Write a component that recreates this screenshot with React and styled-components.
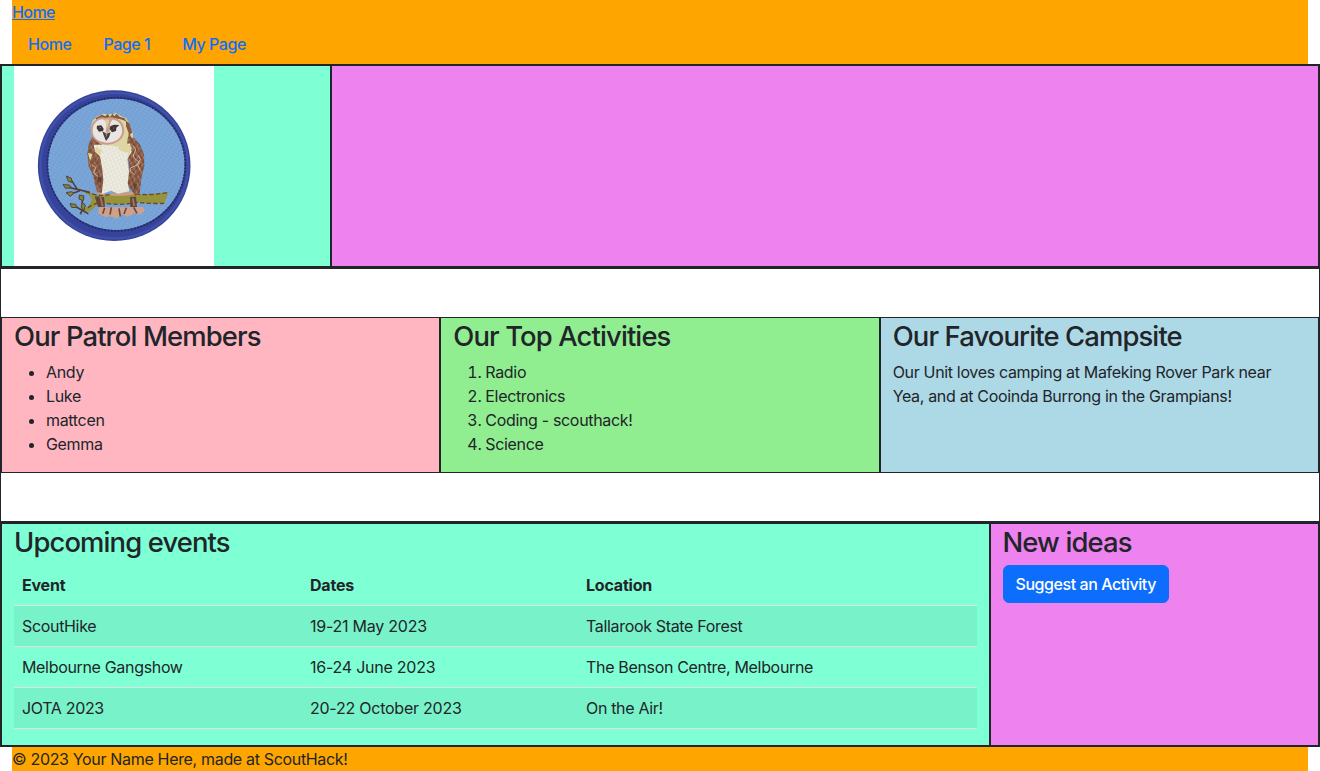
import React from "react";
import styled, { createGlobalStyle } from "styled-components";

const INK = "#212529";
const LINK = "#0d6efd";

const GlobalStyle = createGlobalStyle`
  *, *::before, *::after { box-sizing: border-box; }
  body {
    margin: 0;
    background: #fff;
    color: ${INK};
    font-family: Inter, "Liberation Sans", sans-serif;
    font-size: 16px;
    font-weight: 430;
    line-height: 1.5;
    letter-spacing: -0.33px;
    font-feature-settings: "calt" 0;
  }
`;

const Page = styled.div`
  width: 100%;
  overflow: hidden;
`;

const Header = styled.header`
  margin: 0 12px;
  background: orange;
`;

const Brand = styled.a`
  display: block;
  width: fit-content;
  color: ${LINK};
  font-weight: 470;
  letter-spacing: -0.6px;
  text-decoration: underline;
`;

const Nav = styled.nav`
  display: flex;
`;

const NavLink = styled.a`
  padding: 8px 16px;
  color: ${LINK};
  font-weight: 470;
  letter-spacing: -0.45px;
  text-decoration: none;
`;

const Row = styled.section`
  display: flex;
  border: 1px solid ${INK};
  padding: ${(p) => (p.$spaced ? "48px 0" : "0")};
`;

const Cell = styled.div`
  flex: 0 0 auto;
  width: ${(p) => p.$width};
  padding: 0 12px;
  border: 1px solid ${INK};
  background: ${(p) => p.$color};
`;

const Title = styled.h3`
  margin: 0 0 8px;
  padding-top: 4px;
  height: 33.6px;
  font-size: 27.4px;
  font-weight: 530;
  line-height: 29.6px;
  letter-spacing: -0.87px;
`;

const listStyle = `
  margin: 0 0 16px;
  padding-left: 32px;
`;
const BulletList = styled.ul`${listStyle}`;
const NumberList = styled.ol`${listStyle}`;

const Text = styled.p`
  margin: 0 0 16px;
`;

const Table = styled.table`
  width: 100%;
  margin: 0 0 16px;
  border-collapse: collapse;
  table-layout: fixed;
  text-align: left;
`;

const Col = styled.col`
  width: ${(p) => p.$width || "auto"};
`;

const HeadCell = styled.th`
  padding: 8px;
  font-weight: 700;
  letter-spacing: -0.2px;
  border-bottom: 1px solid #dee2e6;
`;

const BodyRow = styled.tr`
  &:nth-child(odd) { background: rgba(0, 0, 0, 0.05); }
`;

const BodyCell = styled.td`
  padding: 8px;
  border-bottom: 1px solid #dee2e6;

  &:nth-child(2) { letter-spacing: -0.24px; }
`;

const Button = styled.button`
  display: block;
  height: 38px;
  padding: 6px 12px;
  border: 1px solid ${LINK};
  border-radius: 6px;
  background: ${LINK};
  color: #fff;
  font: inherit;
  font-weight: 500;
  letter-spacing: -0.43px;
`;

const Footer = styled.footer`
  margin: 0 12px;
  background: orange;
`;

const Badge = styled.svg`
  display: block;
  width: 200px;
  height: 200px;
  background: #fff;
`;

function OwlBadge() {
  return (
    <Badge viewBox="12 6 600 600" role="img" aria-label="Owl patrol badge">
      <defs>
        <pattern id="twill" width="13" height="9" patternUnits="userSpaceOnUse" patternTransform="rotate(32)">
          <rect width="13" height="9" fill="#739fd3" />
          <path d="M0 3H10" stroke="#86b0df" strokeWidth="3" />
        </pattern>
        <pattern id="feathers" width="17" height="23" patternUnits="userSpaceOnUse" patternTransform="rotate(8)">
          <rect width="17" height="23" fill="#8a5b44" />
          <path d="M3 2l3 8M12 10l-3 9" stroke="#b98f76" strokeWidth="2.5" />
          <path d="M13 1l-2 7M3 14l2 7" stroke="#68402f" strokeWidth="3" />
        </pattern>
        <pattern id="down" width="14" height="15" patternUnits="userSpaceOnUse" patternTransform="rotate(20)">
          <rect width="14" height="15" fill="#e9e7dc" />
          <path d="M2 3l5 3M9 10l3 3" stroke="#d3cdaf" strokeWidth="2" />
          <path d="M9 2l3 4M2 11l4-2" stroke="#fbfaf5" strokeWidth="2" />
        </pattern>
      </defs>
      <ellipse cx="312.500" cy="305" rx="229" ry="226" fill="#36439a" />
      <ellipse cx="312.500" cy="305" rx="221" ry="218" fill="none" stroke="#4150a8" strokeWidth="7" />
      <ellipse cx="319" cy="301" rx="208" ry="201" fill="#303a85" />
      <ellipse cx="319" cy="301" rx="205" ry="197" fill="url(#twill)" />
      <ellipse cx="319" cy="301" rx="207" ry="200" fill="none" stroke="#252d6c" strokeWidth="6" strokeDasharray="5 5" />

      <path d="M262 378Q285 397 313 386Q349 373 389 392L380 407H265Z" fill="#c99d87" />
      <path d="M266 430L400 429L404 440L389 453L374 446L354 459L336 451L320 464L302 456L289 460L265 449Z" fill="#cda28c" />
      <path d="M284 432l-6 17M304 430l-4 22M327 433l4 24M349 431l-7 19M371 430l10 18" stroke="#704638" strokeWidth="5" fill="none" />
      <path d="M213 437Q242 430 245 405Q238 390 222 386L229 380Q255 397 290 393Q335 400 379 390Q424 393 475 385L463 418Q420 420 381 414Q328 427 271 416Q255 428 241 441Q225 446 213 437Z" fill="#96933b" />
      <path d="M228 382Q260 399 300 392M378 390Q426 395 475 385M234 431Q248 421 269 415Q326 427 382 415Q424 420 463 418" fill="none" stroke="#634836" strokeWidth="4" strokeDasharray="13 7" />
      <path d="M254 397l10 32h21l-3-30M360 399l1 30h20l-3-31" fill="#65453a" />
      <path d="M271 398l7 29M368 403l5 23" stroke="#a27b62" strokeWidth="5" />
      <path d="M183 347L202 376L239 385M165 367L201 376M180 391L210 380M190 424L219 440L235 449M216 409L220 440M216 439L211 451" fill="none" stroke="#53403f" strokeWidth="5" />
      <g fill="#858638" stroke="#53413c" strokeWidth="3">
        <path d="M169 336l15 7 2 12-11-3z" />
        <path d="M159 362l20 1 5 8-17 2z" />
        <path d="M168 386l17-3 7 5-11 9z" />
        <path d="M180 419l17 2 4 10-16-1z" />
        <path d="M208 393l14 3-2 14-13-5z" />
        <path d="M216 415l10 8-4 16-8-7z" />
      </g>

      <path d="M259 158L280 150L308 151L318 147L334 157L348 162L357 177L369 210L368 241L333 248L277 247L249 217L242 191L248 170Z" fill="#dfd5a2" />
      <path d="M247 219L237 237L232 270L236 307L250 335L253 355L262 385L286 388L286 348L280 286L292 255Z" fill="url(#feathers)" />
      <path d="M354 218L372 222L389 240L402 271L403 307L395 337L389 387L376 395L353 363L357 302L350 248Z" fill="url(#feathers)" />
      <path d="M273 242L320 247L360 238L365 263L352 285L357 323L353 357L358 382L324 389L303 380L275 391L280 348L276 309L270 278L254 259L251 242Z" fill="url(#down)" />
      <path d="M258 249L276 259L270 275L254 263ZM322 245L348 235L365 251L349 266L328 259ZM234 267L248 270 240 291ZM351 252L366 251L355 278Z" fill="#ded5a3" />
      <path d="M256 162l20-10 10 5 7-8 7 10 8-10 5 8 7-8 10 10 13 3 8 12-10-5-12-4-33-4-22 4-14 5zM348 170l10 8 9 28-7 5 6 16-11-3 1-17-8-20z" fill="#855a3e" />
      <path d="M286 165C269 158 247 171 245 197C244 220 261 235 288 239C312 240 333 229 339 208C342 185 331 168 311 164Q298 161 286 165Z" fill="#e8e5e5" stroke="#c99c89" strokeWidth="6" />
      <path d="M278 163L290 176L287 207L299 205L301 177L311 161" fill="#caa18a" />
      <path d="M285 166L291 195L298 167" fill="#dccda0" />
      <path d="M261 185l13-1 7 10-2 7-12 2-7-10zM301 187l11-5 16 1-9 8-1 10-12 4-7-10z" fill="#413431" />
      <path d="M277 202L290 209L302 205L297 220L288 231L282 217Z" fill="#493c39" />
      <path d="M286 210l4 2-2 6M269 191h3M310 192h3" stroke="#9c928b" strokeWidth="3" fill="none" />
      <path d="M368 245q14 10 5 22t8 22-9 18 2 25M384 274l8 12-10 15 9 18M246 303l11 8-6 16 15 12" fill="none" stroke="#d5b39e" strokeWidth="3" />
      <path d="M264 337l11 5-2 15-11-4zM367 357l14 4-7 18z" fill="#64402f" />
    </Badge>
  );
}

const members = ["Andy", "Luke", "mattcen", "Gemma"];
const activities = ["Radio", "Electronics", "Coding - scouthack!", "Science"];
const events = [
  ["ScoutHike", "19-21 May 2023", "Tallarook State Forest"],
  ["Melbourne Gangshow", "16-24 June 2023", "The Benson Centre, Melbourne"],
  ["JOTA 2023", "20-22 October 2023", "On the Air!"],
];

export default function App() {
  return (
    <Page>
      <GlobalStyle />
      <Header>
        <Brand href="#">Home</Brand>
        <Nav>
          <NavLink href="#">Home</NavLink>
          <NavLink href="#">Page 1</NavLink>
          <NavLink href="#">My Page</NavLink>
        </Nav>
      </Header>
      <Row>
        <Cell $width="25%" $color="aquamarine"><OwlBadge /></Cell>
        <Cell $width="75%" $color="violet" />
      </Row>
      <Row $spaced>
        <Cell $width="33.3333%" $color="lightpink">
          <Title>Our Patrol Members</Title>
          <BulletList>{members.map((m) => <li key={m}>{m}</li>)}</BulletList>
        </Cell>
        <Cell $width="33.3333%" $color="lightgreen">
          <Title>Our Top Activities</Title>
          <NumberList>{activities.map((a) => <li key={a}>{a}</li>)}</NumberList>
        </Cell>
        <Cell $width="33.3333%" $color="lightblue">
          <Title>Our Favourite Campsite</Title>
          <Text>
            Our Unit loves camping at Mafeking Rover Park near Yea, and at Cooinda Burrong in the Grampians!
          </Text>
        </Cell>
      </Row>
      <Row>
        <Cell $width="75%" $color="aquamarine">
          <Title>Upcoming events</Title>
          <Table>
            <colgroup>
              <Col $width="288px" />
              <Col $width="276px" />
              <Col />
            </colgroup>
            <thead>
              <tr>
                <HeadCell>Event</HeadCell>
                <HeadCell>Dates</HeadCell>
                <HeadCell>Location</HeadCell>
              </tr>
            </thead>
            <tbody>
              {events.map((row) => (
                <BodyRow key={row[0]}>
                  {row.map((value) => <BodyCell key={value}>{value}</BodyCell>)}
                </BodyRow>
              ))}
            </tbody>
          </Table>
        </Cell>
        <Cell $width="25%" $color="violet">
          <Title>New ideas</Title>
          <Button>Suggest an Activity</Button>
        </Cell>
      </Row>
      <Footer>© 2023 Your Name Here, made at ScoutHack!</Footer>
    </Page>
  );
}
